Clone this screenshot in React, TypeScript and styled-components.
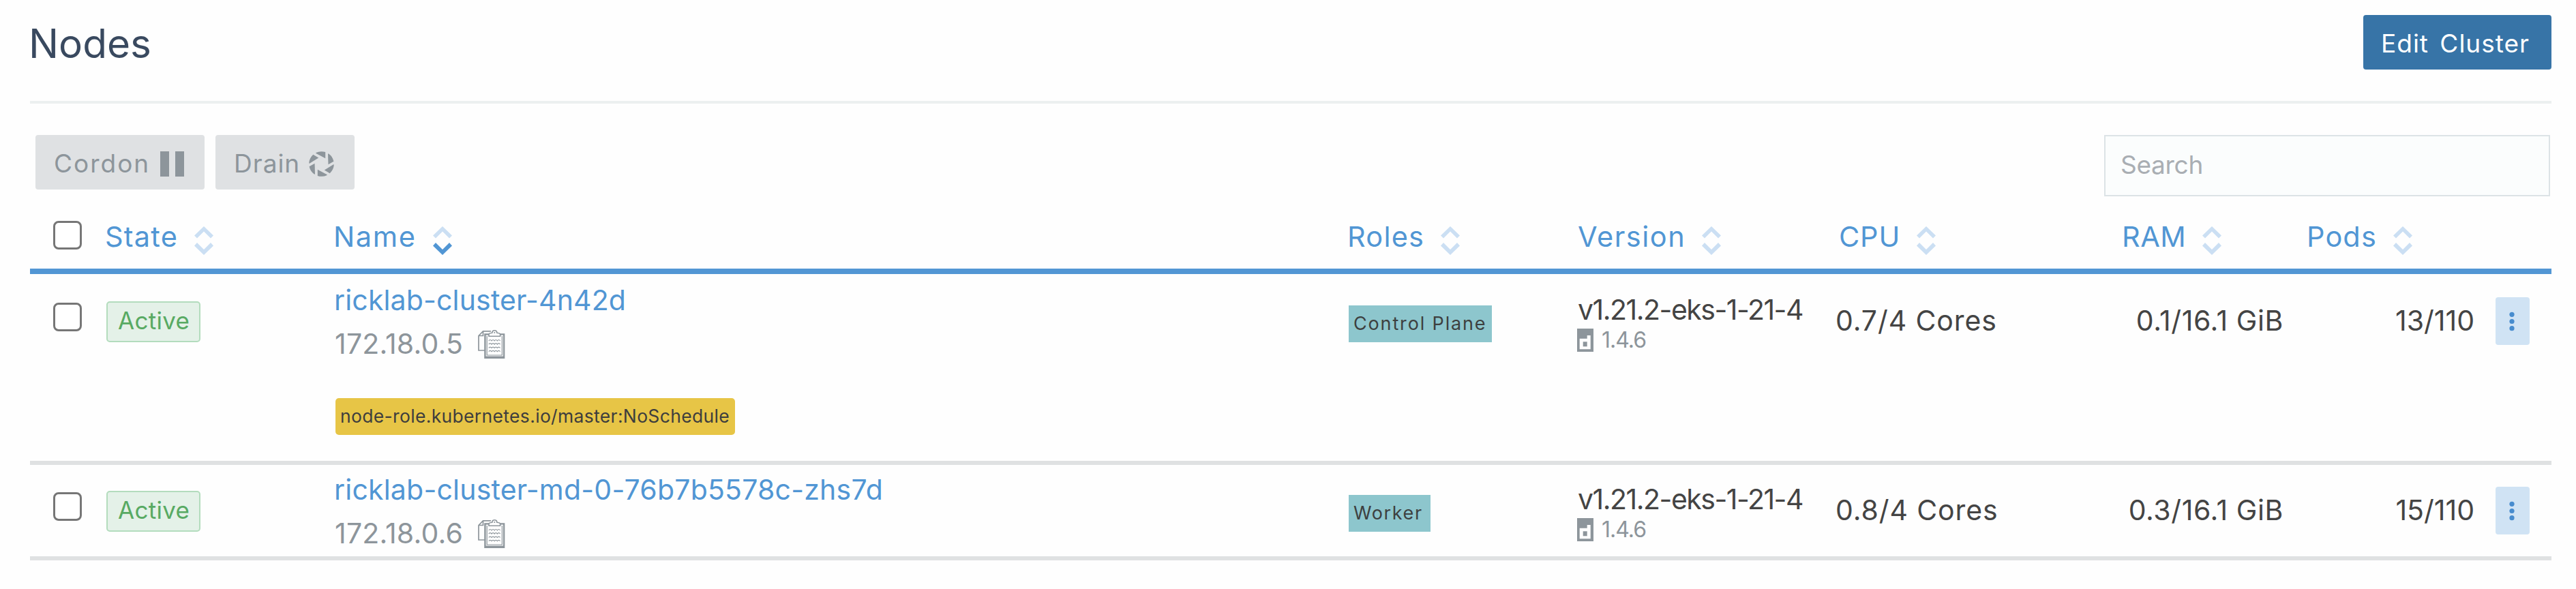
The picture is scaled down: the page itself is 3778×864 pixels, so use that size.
import React from "react";
import styled, { createGlobalStyle, css } from "styled-components";

const GlobalStyle = createGlobalStyle`
  * { box-sizing: border-box; }
  body {
    margin: 0;
    background: #fefefe;
    font-family: Inter, "Open Sans", sans-serif;
    color: #444;
  }
`;

interface Tracking {
  $track?: number;
  $shift?: number;
}

const tracking = css<Tracking>`
  letter-spacing: ${p => p.$track ?? 0}px;
  margin-left: ${p => p.$shift ?? 0}px;
  white-space: nowrap;
`;

const Page = styled.main`
  width: 3778px;
  height: 864px;
  padding: 22px 36px 0 44px;
  overflow: hidden;
`;

const PageHeader = styled.header`
  display: flex;
  justify-content: space-between;
  height: 130px;
  border-bottom: 4px solid #ecf0f0;
`;

const Title = styled.h1`
  margin: 0 0 0 -2px;
  font-size: 58.5px;
  font-weight: 400;
  line-height: 84px;
  letter-spacing: 0px;
  color: #39495f;
`;

const PrimaryButton = styled.button`
  width: 276px;
  height: 80px;
  padding: 3px 0 0 26px;
  border: 0;
  border-radius: 4px;
  background: #3774a7;
  color: #fff;
  font: 400 37px Inter, sans-serif;
  letter-spacing: 1px;
  word-spacing: 5px;
  text-align: left;
  white-space: nowrap;
`;

const Toolbar = styled.div`
  display: flex;
  justify-content: space-between;
  height: 90px;
  margin-top: 46px;
  padding: 0 2px 0 8px;
`;

const BulkActions = styled.div`
  display: flex;
  gap: 16px;
`;

const BulkButton = styled.button<{ $width: number; $track: number }>`
  display: flex;
  align-items: center;
  justify-content: space-between;
  width: ${p => p.$width}px;
  height: 80px;
  padding: 0 30px 0 27px;
  border: 0;
  border-radius: 4px;
  background: #dfe1e3;
  color: #8d959b;
  font: 400 37px Inter, sans-serif;
  letter-spacing: ${p => p.$track}px;

  span {
    padding-top: 3px;
  }

  svg {
    flex: none;
    margin-top: 5px;
  }
`;

const SearchInput = styled.input`
  width: 654px;
  height: 90px;
  padding: 0 22px 4px;
  border: 2px solid #dce3e6;
  border-radius: 0;
  background: #fbfdfd;
  font: 400 37px Inter, sans-serif;
  letter-spacing: -0.3px;
  outline: none;

  &::placeholder {
    color: #a9aeb3;
    opacity: 1;
  }
`;

const gridColumns = css`
  display: grid;
  grid-template-columns: 112px 334px 1488px 336px 378px 416px 272px 280px 82px;
  align-items: start;
`;

const HeadRow = styled.div`
  ${gridColumns}
  height: 114px;
  margin-bottom: 2px;
  padding-top: 35px;
  border-bottom: 8px solid #5296d4;
`;

const BodyRow = styled.div`
  ${gridColumns}
  min-height: 140px;
  border-bottom: 6px solid #dfe1e2;
`;

const Checkbox = styled.input.attrs({ type: "checkbox" })<{ $top: number }>`
  appearance: none;
  width: 42px;
  height: 42px;
  margin: ${p => p.$top}px 0 0 34px;
  border: 3px solid #767676;
  border-radius: 8px;
  background: #fff;
`;

const HeadCell = styled.div`
  display: flex;
  gap: 24px;
  color: #5196d4;
  font-size: 41.5px;
  line-height: 49px;

  svg {
    margin-top: 9px;
  }
`;

const HeadLabel = styled.span<Tracking>`
  ${tracking}
`;

const StateBadge = styled.div`
  width: 138px;
  height: 60px;
  margin-top: 38px;
  padding-left: 15px;
  border: 2px solid #b3dcbd;
  border-radius: 5px;
  background: #e4f1e8;
  color: #58aa63;
  font-size: 35px;
  line-height: 52px;
  letter-spacing: 0.3px;
`;

const NameCell = styled.div`
  padding-top: 4px;
  font-size: 41px;
  line-height: 64px;
`;

const NodeLink = styled.a<Tracking>`
  ${tracking}
  display: block;
  color: #5196d4;
`;

const Address = styled.div`
  display: flex;
  gap: 22px;
  margin-left: 1px;
  color: #8d959b;
  letter-spacing: 0.2px;

  svg {
    margin-top: 12px;
  }
`;

const Taint = styled.div`
  width: 586px;
  height: 54px;
  margin: 48px 0 38px 2px;
  padding-left: 7px;
  border-radius: 5px;
  background: #e7c546;
  color: #3d3d3d;
  font-size: 26.5px;
  line-height: 53px;
  letter-spacing: 0.33px;
`;

const RoleBadge = styled.div<{ $width: number; $track: number }>`
  width: ${p => p.$width}px;
  height: 54px;
  margin-top: 44px;
  padding-left: 7px;
  background: #8dc6cd;
  color: #3d4040;
  font-size: 27px;
  line-height: 54px;
  letter-spacing: ${p => p.$track}px;
  white-space: nowrap;
`;

const VersionCell = styled.div`
  padding-top: 29px;
  font-size: 41px;
  line-height: 42px;
  letter-spacing: -1.5px;
`;

const Runtime = styled.div`
  display: flex;
  gap: 12px;
  margin: 2px 0 0 -1px;
  color: #8d959b;
  font-size: 32px;
  letter-spacing: -1px;

  svg {
    margin-top: 5px;
  }

  span {
    padding-top: 1px;
  }
`;

const Metric = styled.div<{ $inset: number; $track: number }>`
  padding: 42px ${p => p.$inset}px 0 0;
  font-size: 41px;
  line-height: 48px;
  letter-spacing: ${p => p.$track}px;
  text-align: right;
  white-space: nowrap;
`;

const RowMenu = styled.button`
  display: flex;
  justify-content: center;
  width: 50px;
  height: 70px;
  margin-top: 32px;
  padding: 0 2px 0 0;
  border: 0;
  border-radius: 4px;
  background: #d0e3f4;
`;

const PauseIcon = () => (
  <svg width="35" height="37" viewBox="0 0 35 37" fill="#8d959b">
    <path d="M0 0h13v37H0zM22 0h13v37H22z" />
  </svg>
);

const ApertureIcon = () => (
  <svg width="37" height="37" viewBox="-18.5 -18.5 37 37" fill="#8d959b">
    {[0, 60, 120, 180, 240, 300].map(angle => (
      <path
        key={angle}
        transform={`rotate(${angle})`}
        d="M5.7-8.2V-17.4A18.3 18.3 0 0 0-8.2-16.4L-8-15.6Z"
      />
    ))}
  </svg>
);

const SortIcon = ({ sorted = false }: { sorted?: boolean }) => (
  <svg width="28" height="42" viewBox="0 0 28 42" fill="#cbdff3">
    <path d="M14 0 28 13.5 24 17.5 14 7.5 4 17.5 0 13.5Z" />
    <path
      d="M14 42 28 28.5 24 24 14 34 4 24 0 28.5Z"
      fill={sorted ? "#5196d4" : undefined}
    />
  </svg>
);

const ClipboardIcon = () => (
  <svg width="40" height="42" viewBox="0 0 40 42" fill="none" stroke="#8d959b">
    <path d="M10 30H1V8.5L7.5 1.8H19M1 8.5H7.5V1.8" strokeWidth="1.7" />
    <path d="M9.2 5.3H39.3V42H9.2Z" fill="#8d959b" stroke="none" />
    <path d="M11.6 7.6H37V38.5H11.6Z" fill="#fefefe" stroke="none" />
    <path d="M13.2 9V37H35.4V9" strokeWidth="1.2" />
    <path d="M16 9.3V6.4Q16 4.7 20.8 4.2 20.8.8 24.3.8T27.8 4.2Q32.6 4.7 32.6 6.4V9.3Z" fill="#fefefe" strokeWidth="1.6" />
    <circle cx="24.3" cy="4" r="1.1" fill="#8d959b" stroke="none" />
    {[15.8, 21, 26.4, 31.6].map(y => (
      <path key={y} d={`M15.8 ${y}q2.1-2.6 4.2 0 2.1-2.6 4.2 0 2.1-2.6 4.2 0 2.1-2.6 4.2 0`} strokeWidth="1.2" />
    ))}
  </svg>
);

const ContainerdIcon = () => (
  <svg width="24" height="35" viewBox="0 0 24 35">
    <path d="M0 0H24V34H0Z" fill="#8d959b" />
    <path d="M3.7 14.7H14.7V10H19.7V30.3H3.7Z" fill="#fefefe" />
    <path d="M8.7 19.3H14.7V26.3H8.7Z" fill="#8d959b" />
  </svg>
);

const MoreIcon = () => (
  <svg width="8" height="70" viewBox="0 0 8 70" fill="#478cce">
    <circle cx="4" cy="25.3" r="3.6" />
    <circle cx="4" cy="35.5" r="3.6" />
    <circle cx="4" cy="45.7" r="3.6" />
  </svg>
);

const columns = [
  { label: "State", track: 1.2, shift: -2 },
  { label: "Name", track: 1.6, shift: -1 },
  { label: "Roles", track: 1.2, shift: -2 },
  { label: "Version", track: 1.5, shift: 0 },
  { label: "CPU", track: 0.8, shift: 5 },
  { label: "RAM", track: 0.5, shift: 4 },
  { label: "Pods", track: 1.1, shift: 3 },
];

const nodes = [
  {
    name: "ricklab-cluster-4n42d",
    nameTrack: 0.15,
    ip: "172.18.0.5",
    taint: "node-role.kubernetes.io/master:NoSchedule",
    role: { label: "Control Plane", width: 210, track: 1.85 },
    cpu: "0.7/4 Cores",
    ram: "0.1/16.1 GiB",
    pods: "13/110",
  },
  {
    name: "ricklab-cluster-md-0-76b7b5578c-zhs7d",
    nameTrack: 0.2,
    ip: "172.18.0.6",
    taint: null,
    role: { label: "Worker", width: 120, track: 1.6 },
    cpu: "0.8/4 Cores",
    ram: "0.3/16.1 GiB",
    pods: "15/110",
  },
];

export default function App() {
  return (
    <Page>
      <GlobalStyle />
      <PageHeader>
        <Title>Nodes</Title>
        <PrimaryButton>Edit Cluster</PrimaryButton>
      </PageHeader>
      <Toolbar>
        <BulkActions>
          <BulkButton $width={248} $track={2}>
            <span>Cordon</span>
            <PauseIcon />
          </BulkButton>
          <BulkButton $width={204} $track={1}>
            <span>Drain</span>
            <ApertureIcon />
          </BulkButton>
        </BulkActions>
        <SearchInput placeholder="Search" />
      </Toolbar>
      <HeadRow>
        <Checkbox $top={1} />
        {columns.map(column => (
          <HeadCell key={column.label}>
            <HeadLabel $track={column.track} $shift={column.shift}>
              {column.label}
            </HeadLabel>
            <SortIcon sorted={column.label === "Name"} />
          </HeadCell>
        ))}
      </HeadRow>
      {nodes.map(node => (
        <BodyRow key={node.name}>
          <Checkbox $top={40} />
          <StateBadge>Active</StateBadge>
          <NameCell>
            <NodeLink $track={node.nameTrack}>{node.name}</NodeLink>
            <Address>
              <span>{node.ip}</span>
              <ClipboardIcon />
            </Address>
            {node.taint && <Taint>{node.taint}</Taint>}
          </NameCell>
          <RoleBadge $width={node.role.width} $track={node.role.track}>
            {node.role.label}
          </RoleBadge>
          <VersionCell>
            v1.21.2-eks-1-21-4
            <Runtime>
              <ContainerdIcon />
              <span>1.4.6</span>
            </Runtime>
          </VersionCell>
          <Metric $inset={180} $track={0.9}>{node.cpu}</Metric>
          <Metric $inset={31} $track={0.6}>{node.ram}</Metric>
          <Metric $inset={31} $track={0}>{node.pods}</Metric>
          <RowMenu>
            <MoreIcon />
          </RowMenu>
        </BodyRow>
      ))}
    </Page>
  );
}
